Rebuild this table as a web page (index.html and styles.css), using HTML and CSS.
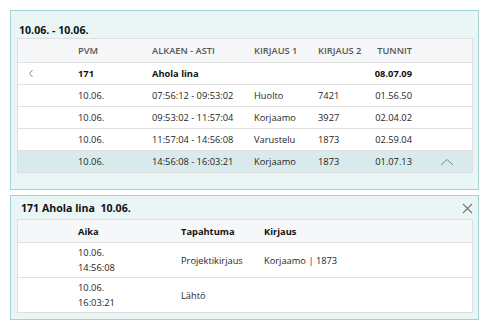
FILE: index.html
```html
<!DOCTYPE html>
<html>
<head>
<meta charset="utf-8">
<link rel="stylesheet" href="styles.css">
</head>
<body>
<section class="panel panel-main">
  <h2 class="panel-title">10.06. - 10.06.</h2>
  <div class="table">
    <div class="row head">
      <span></span><span>PVM</span><span>ALKAEN - ASTI</span><span>KIRJAUS 1</span><span>KIRJAUS 2</span><span class="num">TUNNIT</span><span></span>
    </div>
    <div class="row group">
      <span class="icon-cell"><svg width="6" height="9" viewBox="0 0 6 9"><path d="M4.5 1 L1.5 4.5 L4.5 8" fill="none" stroke="#888" stroke-width="1"/></svg></span>
      <span>171</span><span>Ahola lina</span><span></span><span></span><span class="num">08.07.09</span><span></span>
    </div>
    <div class="row">
      <span></span><span>10.06.</span><span>07:56:12 - 09:53:02</span><span>Huolto</span><span>7421</span><span class="num">01.56.50</span><span></span>
    </div>
    <div class="row">
      <span></span><span>10.06.</span><span>09:53:02 - 11:57:04</span><span>Korjaamo</span><span>3927</span><span class="num">02.04.02</span><span></span>
    </div>
    <div class="row">
      <span></span><span>10.06.</span><span>11:57:04 - 14:56:08</span><span>Varustelu</span><span>1873</span><span class="num">02.59.04</span><span></span>
    </div>
    <div class="row selected">
      <span></span><span>10.06.</span><span>14:56:08 - 16:03:21</span><span>Korjaamo</span><span>1873</span><span class="num">01.07.13</span>
      <span class="up-cell"><svg width="14" height="8" viewBox="0 0 14 8"><path d="M1 7 L7 1.5 L13 7" fill="none" stroke="#888" stroke-width="1"/></svg></span>
    </div>
  </div>
</section>

<section class="panel panel-detail">
  <div class="detail-head">
    <h2 class="panel-title">171 Ahola lina&nbsp; 10.06.</h2>
    <svg class="close" width="11" height="11" viewBox="0 0 11 11"><path d="M1 1 L10 10 M10 1 L1 10" fill="none" stroke="#777" stroke-width="1.1"/></svg>
  </div>
  <div class="table">
    <div class="drow dhead">
      <span></span><span>Aika</span><span>Tapahtuma</span><span>Kirjaus</span>
    </div>
    <div class="drow">
      <span></span><span class="two">10.06.<br>14:56:08</span><span>Projektikirjaus</span><span>Korjaamo | 1873</span>
    </div>
    <div class="drow">
      <span></span><span class="two">10.06.<br>16:03:21</span><span>Lähtö</span><span></span>
    </div>
  </div>
</section>
</body>
</html>
```
FILE: styles.css
```css
html, body {
  margin: 0;
  padding: 0;
  background: #ffffff;
}
body {
  padding: 10px 11px 0 10px;
  font-family: "Open Sans", "Noto Sans", sans-serif;
  font-size: 9.3px;
  color: #1e1e1e;
  display: flex;
  flex-direction: column;
  gap: 5px;
}
.panel {
  border: 1px solid #a3d2d2;
  background: #eaf6f6;
  padding: 0 5px 0 6px;
}
.panel-main {
  height: 178px;
}
.panel-detail {
  height: 123px;
}
.panel-title {
  margin: 0;
  font-size: 10.6px;
  font-weight: 700;
  color: #111;
  line-height: 14px;
}
.panel-main .panel-title {
  padding: 12px 0 0 2px;
  height: 15px;
}
.table {
  background: #fff;
  border: 1px solid #dedede;
}
.row {
  display: grid;
  grid-template-columns: 60px 74px 102px 64px 50px 44px 1fr;
  height: 21px;
  align-items: center;
  border-top: 1px solid #e0e0e0;
}
.row.head {
  border-top: 0;
  height: 23px;
  background: #f6f7f9;
  color: #555;
  font-weight: 600;
}
.row.group {
  font-weight: 700;
  color: #111;
}
.row.selected {
  background: #d8eaeb;
}
.num {
  text-align: right;
}
.icon-cell {
  display: flex;
  padding-left: 10px;
}
.up-cell {
  display: flex;
  padding-left: 28px;
}
.detail-head {
  display: flex;
  justify-content: space-between;
  align-items: center;
  height: 23px;
  padding: 0 0 0 4px;
}
.detail-head .panel-title {
  padding-top: 1px;
}
.close {
  margin-right: 0;
  margin-top: 1px;
}
.drow {
  display: grid;
  grid-template-columns: 60px 103px 83px 1fr;
  height: 34px;
  align-items: center;
  border-top: 1px solid #e0e0e0;
}
.drow.dhead {
  border-top: 0;
  height: 22px;
  background: #f6f7f9;
  font-weight: 700;
  color: #111;
}
.two {
  line-height: 15px;
}
```
